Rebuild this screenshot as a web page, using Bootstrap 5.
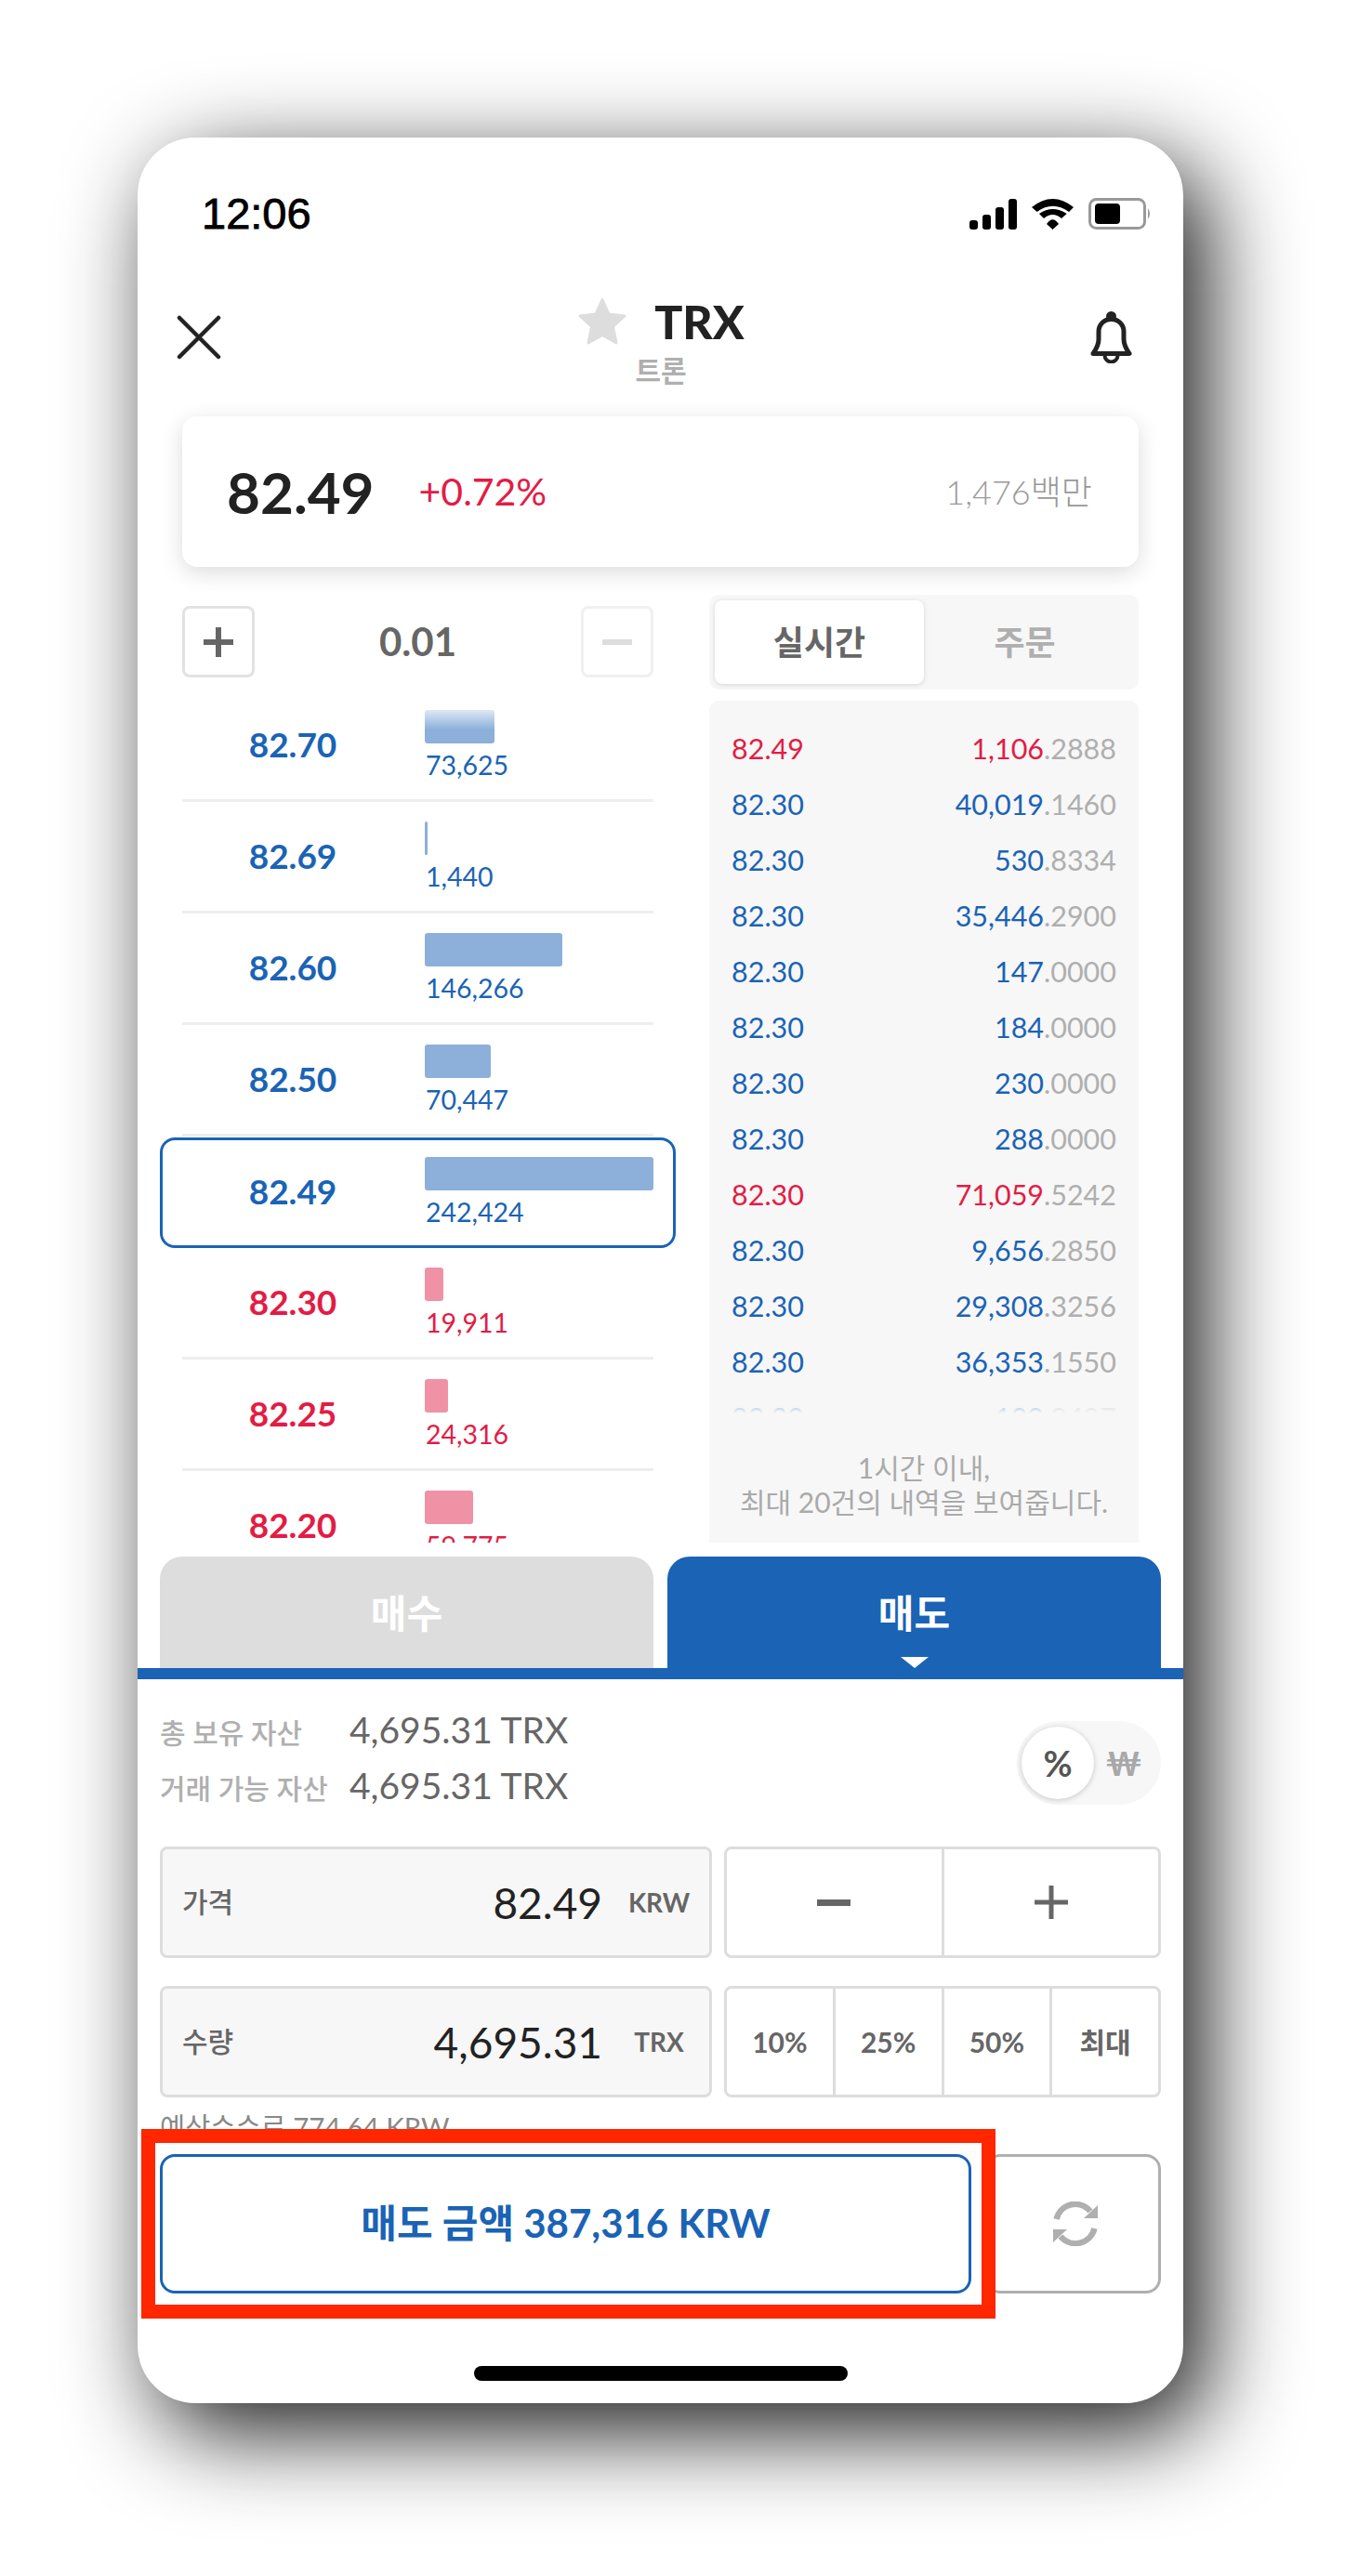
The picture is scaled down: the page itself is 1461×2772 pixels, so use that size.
<!DOCTYPE html>
<html lang="ko">
<head>
  <meta charset="UTF-8" />
  <meta name="viewport" content="width=device-width, initial-scale=1.0"/>
  <title>TRX 매도</title>
  <link rel="stylesheet" href="https://cdn.jsdelivr.net/npm/bootstrap@5.3.0/dist/css/bootstrap.min.css" />
  <style>
    :root { --blue: #1a63b5; --red: #e31c45; --line: #ddd; --soft: #f7f7f7; --gray: #666; --mute: #afafaf; }
    body {
      font-family: Lato, "Noto Sans CJK KR", sans-serif;
      background: #fff;
      height: 2772px;
      overflow: hidden;
      padding: 148px 0 0 148px;
      color: #222;
    }
    .phone {
      width: 1125px;
      height: 2438px;
      background: #fff;
      border-radius: 62px;
      box-shadow: 24px 30px 100px rgba(0,0,0,.9);
      overflow: hidden;
    }

    /* status bar */
    .status-bar { height: 164px; padding: 0 34px 0 69px; }
    .status-time { font-family: "Liberation Sans", sans-serif; font-size: 47px; font-weight: 400; color: #000; -webkit-text-stroke: .8px #000; }
    .status-icons { gap: 16px; }

    /* header */
    .top-head { height: 136px; padding: 0 55px 34px 42px; }
    .head-side { width: 130px; }
    .head-title { line-height: 1; margin-left: 14px; }
    .coin-name { font-size: 50px; font-weight: 900; margin-left: 29px; line-height: 54px; }
    .coin-sub { font-size: 30px; font-weight: 700; color: var(--mute); line-height: 32px; margin-top: 9px; margin-bottom: -7px; }

    /* price card */
    .price-box {
      height: 162px;
      margin: 0 48px;
      padding: 0 50px 0 48px;
      border-radius: 16px;
      box-shadow: 0 6px 24px rgba(0,0,0,.14);
    }
    .price-now { font-size: 62px; font-weight: 700; line-height: 1; }
    .price-rate { font-size: 41px; color: var(--red); margin-left: 48px; }
    .price-vol { font-size: 36px; color: #999; font-weight: 300; }

    /* middle columns */
    .market-area { height: 1020px; margin-top: 30px; padding: 0 48px; gap: 60px; }
    .book-col { width: 507px; flex: none; padding-top: 12px; }
    .trade-col { width: 462px; flex: none; }
    .step-btn {
      width: 78px; height: 77px;
      border: 3px solid #e2e2e2; border-radius: 8px; background: #fff; padding: 0;
    }
    .step-btn.off { border-color: #f0f0f0; }
    .step-val { font-size: 42px; font-weight: 700; color: var(--gray); }
    .book-list { margin-top: 14px; }
    .book-list::before {
      content: ""; position: absolute; z-index: 2; left: 0; right: 0; top: 0; height: 42px;
      background: linear-gradient(#fff 30%, rgba(255,255,255,0));
    }
    .book-row { height: 120px; padding-top: 21px; border-bottom: 3px solid #eee; }
    .book-row.sel {
      height: 119px; margin: 1px -24px 0; padding: 18px 21px 0;
      border: 3px solid var(--blue); border-radius: 16px; background: #fff; position: relative; z-index: 1;
    }
    .book-price { width: 238px; margin-right: 23px; font-size: 37px; font-weight: 700; text-align: center; padding-top: 9px; }
    .book-vol { width: 246px; }
    .vol-bar { height: 36px; border-radius: 3px; }
    .vol-num { font-size: 28.500px; line-height: 36px; margin-top: 5px; padding-left: 1px; }
    .tone-blue { color: var(--blue); }
    .tone-red { color: var(--red); }
    .tone-blue .vol-bar { background: #8cb0da; }
    .tone-red .vol-bar { background: #f092a5; }

    .side-tabs { height: 102px; padding: 6px; background: var(--soft); border-radius: 10px; }
    .side-tab { font-size: 36px; font-weight: 700; color: var(--mute); }
    .side-tab.on { width: 225px; flex: none; background: #fff; color: var(--gray); border-radius: 8px; box-shadow: 0 1px 5px rgba(0,0,0,.14); }
    .side-tab.rest { flex: 1; padding-right: 8px; }
    .tape { margin-top: 12px; background: var(--soft); border-radius: 10px 10px 0 0; height: 906px; padding: 22px 24px 0; }
    .tape-rows { height: 745px; overflow: hidden; }
    .tape-rows::after {
      content: ""; position: absolute; left: 0; right: 0; bottom: 0; height: 26px;
      background: linear-gradient(rgba(247,247,247,0), #f7f7f7);
    }
    .tape-row { height: 60px; font-size: 30.500px; }
    .tape-row .frac { color: var(--mute); }
    .tape-note { font-size: 30px; line-height: 37px; color: #aaa; text-align: center; margin-top: 40px; }

    /* buy / sell tabs */
    .deal-tabs { margin-top: 15px; padding: 0 24px; gap: 15px; height: 120px; }
    .deal-tab {
      flex: 1; border-radius: 24px 24px 0 0; color: #fff; font-size: 42px; font-weight: 700; padding-top: 2px;
      background: var(--line);
    }
    .deal-tab.on { background: var(--blue); }
    .deal-tab.on::after {
      content: ""; position: absolute; left: 50%; bottom: 0; margin-left: -15px;
      border-left: 15px solid transparent; border-right: 15px solid transparent; border-bottom: 0;
      border-top: 12px solid #fff;
    }
    .deal-band { height: 12px; background: var(--blue); }

    /* order form */
    .order-form { padding: 27px 24px 0; }
    .asset-line { height: 60px; }
    .asset-label { width: 204px; font-size: 30px; font-weight: 500; color: var(--mute); white-space: nowrap; }
    .asset-val { font-size: 39px; color: var(--gray); margin-top: -5px; }
    .unit-switch { width: 155px; height: 90px; margin-top: 18px; padding: 6px 5px; background: var(--soft); border-radius: 45px; }
    .unit-knob { width: 78px; height: 78px; background: #fff; border-radius: 50%; box-shadow: 0 1px 6px rgba(0,0,0,.2); font-size: 38px; font-weight: 700; color: #555; }
    .unit-other { flex: 1; font-size: 36px; font-weight: 700; color: #a8a8a8; padding-right: 3px; }
    .form-line { height: 120px; gap: 13px; margin-top: 30px; }
    .form-line.first { margin-top: 33px; }
    .input-box {
      width: 594px; flex: none; background: var(--soft); border: 3px solid var(--line); border-radius: 8px; padding: 0 20px 0 21px;
    }
    .input-label { font-size: 30px; font-weight: 500; color: var(--gray); margin-top: -2px; }
    .input-val { font-size: 46px; margin-right: 27px; }
    .input-unit { font-size: 28px; font-weight: 700; color: var(--gray); width: 68px; text-align: center; }
    .btn-group-box { flex: 1; border: 3px solid var(--line); border-radius: 8px; }
    .cell-btn { flex: 1; border: 0; background: #fff; padding: 0; color: var(--gray); font-size: 30px; font-weight: 700; border-radius: 6px; }
    .cell-btn + .cell-btn { border-left: 3px solid var(--line); border-radius: 0 6px 6px 0; }
    .fee-text { font-size: 29.500px; line-height: 36px; color: #888; margin-top: 14px; height: 47px; overflow: hidden; }
    .submit-line { gap: 15px; height: 150px; }
    .submit-btn { width: 873px; flex: none; border: 3px solid var(--blue); border-radius: 16px; background: #fff; color: var(--blue); font-size: 42px; font-weight: 700; padding: 0 0 2px; }
    .reset-btn { flex: 1; border: 3px solid var(--mute); border-radius: 16px; background: #fff; padding: 0 0 0 4px; }
    .home-bar { width: 402px; height: 16px; background: #000; border-radius: 8px; margin: 78px auto 0; }
    .mark-frame { position: absolute; left: 4px; top: 2143px; width: 919px; height: 204px; border: 15px solid #ff2600; z-index: 5; pointer-events: none; }
  </style>
</head>
<body>
  <div class="phone position-relative">
    <!-- Status bar -->
    <div class="status-bar d-flex align-items-center justify-content-between">
      <span class="status-time">12:06</span>
      <div class="status-icons d-flex align-items-center">
        <svg width="51" height="33" viewBox="0 0 51 33"><rect x="0" y="23" width="9" height="10" rx="3"/><rect x="14" y="17" width="9" height="16" rx="3"/><rect x="28" y="9" width="9" height="24" rx="3"/><rect x="42" y="0" width="9" height="33" rx="3"/></svg>
        <svg width="45" height="33" viewBox="0 0 45 33"><path d="M0 9Q22.500-9 45 9l-5 5Q22.500 1.500 5.600 14z"/><path d="M8 16Q22.500 6 37.700 16L32 21Q22.500 13 13 21z"/><path d="M16 27Q22.500 17.500 29 27L22.500 33z"/></svg>
        <svg width="68" height="34" viewBox="0 0 68 34"><rect x="1.500" y="1.500" width="59" height="31" rx="7" fill="#fff" stroke="#999" stroke-width="3"/><rect x="7" y="6" width="27" height="22" rx="4"/><path d="M64 11q4 6 0 12z" fill="#999"/></svg>
      </div>
    </div>

    <!-- Header -->
    <div class="top-head d-flex align-items-center justify-content-between">
      <div class="head-side">
        <svg width="48" height="48" viewBox="0 0 48 48"><path d="M3 3 45 45M45 3 3 45" stroke="#222" stroke-width="4.500" stroke-linecap="round" fill="none"/></svg>
      </div>
      <div class="head-title d-flex flex-column align-items-center">
        <div class="d-flex align-items-center">
          <svg width="54" height="50" viewBox="0 0 54 50"><path d="M27 1.500 34 17l17 2-12.500 11.500L42 48 27 39.500 12 48l3.500-17.500L3 19l17-2z" fill="#ddd" stroke="#ddd" stroke-width="3" stroke-linejoin="round"/></svg>
          <span class="coin-name">TRX</span>
        </div>
        <span class="coin-sub">트론</span>
      </div>
      <div class="head-side d-flex justify-content-end">
        <svg width="45" height="56" viewBox="0 0 45 56"><path d="M3 45.500C6 41 9 37 9 30V22C9 14 15 8.500 22.500 8.500S36 14 36 22V30C36 37 39 41 42 45.500Z" fill="none" stroke="#222" stroke-width="5" stroke-linejoin="round"/><circle cx="22.500" cy="5.500" r="5.500" fill="#222"/><path d="M15.500 47.500a7 7 0 0 0 14 0" fill="none" stroke="#222" stroke-width="4"/></svg>
      </div>
    </div>

    <!-- Price summary -->
    <div class="price-box d-flex align-items-center">
      <span class="price-now">82.49</span>
      <span class="price-rate">+0.72%</span>
      <span class="price-vol ms-auto">1,476백만</span>
    </div>

    <div class="market-area d-flex overflow-hidden">
      <!-- Order book -->
      <div class="book-col">
        <div class="d-flex align-items-center justify-content-between">
          <button class="step-btn d-flex align-items-center justify-content-center"><svg width="32" height="32" viewBox="0 0 32 32"><path d="M0 13h13V0h6v13h13v6H19v13h-6V19H0z" fill="#666"/></svg></button>
          <span class="step-val">0.01</span>
          <button class="step-btn off d-flex align-items-center justify-content-center"><svg width="32" height="6" viewBox="0 0 32 6"><rect width="32" height="6" fill="#ddd"/></svg></button>
        </div>
        <div class="book-list position-relative">
          <div class="book-row d-flex align-items-start tone-blue"><div class="book-price">82.70</div><div class="book-vol"><div class="vol-bar" style="width:75px"></div><div class="vol-num">73,625</div></div></div>
          <div class="book-row d-flex align-items-start tone-blue"><div class="book-price">82.69</div><div class="book-vol"><div class="vol-bar" style="width:3px"></div><div class="vol-num">1,440</div></div></div>
          <div class="book-row d-flex align-items-start tone-blue"><div class="book-price">82.60</div><div class="book-vol"><div class="vol-bar" style="width:148px"></div><div class="vol-num">146,266</div></div></div>
          <div class="book-row d-flex align-items-start tone-blue"><div class="book-price">82.50</div><div class="book-vol"><div class="vol-bar" style="width:71px"></div><div class="vol-num">70,447</div></div></div>
          <div class="book-row sel d-flex align-items-start tone-blue"><div class="book-price">82.49</div><div class="book-vol"><div class="vol-bar" style="width:246px"></div><div class="vol-num">242,424</div></div></div>
          <div class="book-row d-flex align-items-start tone-red"><div class="book-price">82.30</div><div class="book-vol"><div class="vol-bar" style="width:20px"></div><div class="vol-num">19,911</div></div></div>
          <div class="book-row d-flex align-items-start tone-red"><div class="book-price">82.25</div><div class="book-vol"><div class="vol-bar" style="width:25px"></div><div class="vol-num">24,316</div></div></div>
          <div class="book-row d-flex align-items-start tone-red"><div class="book-price">82.20</div><div class="book-vol"><div class="vol-bar" style="width:52px"></div><div class="vol-num">59,775</div></div></div>
        </div>
      </div>

      <!-- Live trades -->
      <div class="trade-col">
        <div class="side-tabs d-flex">
          <div class="side-tab on d-flex align-items-center justify-content-center">실시간</div>
          <div class="side-tab rest d-flex align-items-center justify-content-center">주문</div>
        </div>
        <div class="tape">
          <div class="tape-rows position-relative">
            <div class="tape-row d-flex align-items-center justify-content-between tone-red"><span>82.49</span><span>1,106<span class="frac">.2888</span></span></div>
            <div class="tape-row d-flex align-items-center justify-content-between tone-blue"><span>82.30</span><span>40,019<span class="frac">.1460</span></span></div>
            <div class="tape-row d-flex align-items-center justify-content-between tone-blue"><span>82.30</span><span>530<span class="frac">.8334</span></span></div>
            <div class="tape-row d-flex align-items-center justify-content-between tone-blue"><span>82.30</span><span>35,446<span class="frac">.2900</span></span></div>
            <div class="tape-row d-flex align-items-center justify-content-between tone-blue"><span>82.30</span><span>147<span class="frac">.0000</span></span></div>
            <div class="tape-row d-flex align-items-center justify-content-between tone-blue"><span>82.30</span><span>184<span class="frac">.0000</span></span></div>
            <div class="tape-row d-flex align-items-center justify-content-between tone-blue"><span>82.30</span><span>230<span class="frac">.0000</span></span></div>
            <div class="tape-row d-flex align-items-center justify-content-between tone-blue"><span>82.30</span><span>288<span class="frac">.0000</span></span></div>
            <div class="tape-row d-flex align-items-center justify-content-between tone-red"><span>82.30</span><span>71,059<span class="frac">.5242</span></span></div>
            <div class="tape-row d-flex align-items-center justify-content-between tone-blue"><span>82.30</span><span>9,656<span class="frac">.2850</span></span></div>
            <div class="tape-row d-flex align-items-center justify-content-between tone-blue"><span>82.30</span><span>29,308<span class="frac">.3256</span></span></div>
            <div class="tape-row d-flex align-items-center justify-content-between tone-blue"><span>82.30</span><span>36,353<span class="frac">.1550</span></span></div>
            <div class="tape-row d-flex align-items-center justify-content-between tone-blue"><span>82.30</span><span>100<span class="frac">.0407</span></span></div>
          </div>
          <p class="tape-note mb-0">1시간 이내,<br>최대 20건의 내역을 보여줍니다.</p>
        </div>
      </div>
    </div>

    <!-- Buy / sell -->
    <div class="deal-tabs d-flex">
      <div class="deal-tab d-flex align-items-center justify-content-center">매수</div>
      <div class="deal-tab on position-relative d-flex align-items-center justify-content-center">매도</div>
    </div>
    <div class="deal-band"></div>

    <div class="order-form">
      <div class="d-flex justify-content-between align-items-start">
        <div>
          <div class="asset-line d-flex align-items-center"><span class="asset-label">총 보유 자산</span><span class="asset-val">4,695.31 TRX</span></div>
          <div class="asset-line d-flex align-items-center"><span class="asset-label">거래 가능 자산</span><span class="asset-val">4,695.31 TRX</span></div>
        </div>
        <div class="unit-switch d-flex align-items-center">
          <div class="unit-knob d-flex align-items-center justify-content-center">%</div>
          <div class="unit-other text-center">₩</div>
        </div>
      </div>

      <div class="form-line first d-flex">
        <div class="input-box d-flex align-items-center">
          <span class="input-label">가격</span>
          <span class="input-val ms-auto">82.49</span>
          <span class="input-unit">KRW</span>
        </div>
        <div class="btn-group-box d-flex">
          <button class="cell-btn d-flex align-items-center justify-content-center"><svg width="36" height="7" viewBox="0 0 36 7"><rect width="36" height="7" fill="#666"/></svg></button>
          <button class="cell-btn d-flex align-items-center justify-content-center"><svg width="36" height="36" viewBox="0 0 36 36"><path d="M15.500 0h5v15.500H36v5H20.500V36h-5V20.500H0v-5h15.500z" fill="#666"/></svg></button>
        </div>
      </div>

      <div class="form-line d-flex">
        <div class="input-box d-flex align-items-center">
          <span class="input-label">수량</span>
          <span class="input-val ms-auto">4,695.31</span>
          <span class="input-unit">TRX</span>
        </div>
        <div class="btn-group-box d-flex">
          <button class="cell-btn">10%</button>
          <button class="cell-btn">25%</button>
          <button class="cell-btn">50%</button>
          <button class="cell-btn">최대</button>
        </div>
      </div>

      <div class="fee-text">예상수수료 774.64 KRW</div>

      <div class="submit-line d-flex">
        <button class="submit-btn">매도 금액 387,316 KRW</button>
        <button class="reset-btn d-flex align-items-center justify-content-center">
          <svg width="48" height="48" viewBox="0 0 48 48"><g fill="none" stroke="#afafaf" stroke-width="6.500"><path d="M3.600 19A20.800 20.800 0 0 1 40 10.500"/><path d="M44.400 29A20.800 20.800 0 0 1 8 37.500"/></g><path d="M48 4V18H33z" fill="#afafaf"/><path d="M0 44V30H15z" fill="#afafaf"/></svg>
        </button>
      </div>

      <div class="home-bar"></div>
    </div>

    <div class="mark-frame"></div>
  </div>

  <script src="https://cdn.jsdelivr.net/npm/bootstrap@5.3.0/dist/js/bootstrap.bundle.min.js"></script>
</body>
</html>
